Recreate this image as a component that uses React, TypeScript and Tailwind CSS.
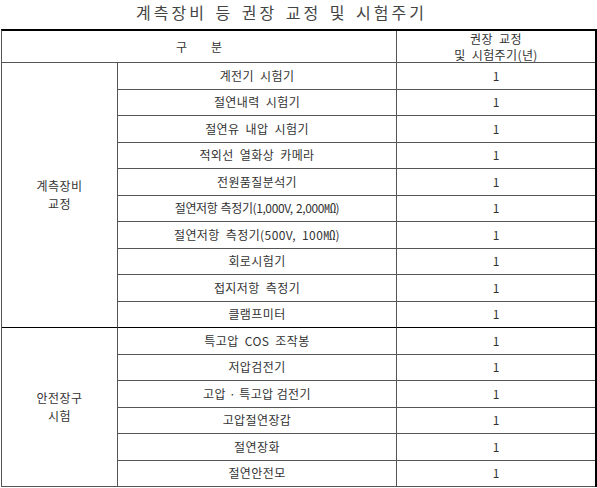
import React from "react";

const calibration = [
  "계전기 시험기",
  "절연내력 시험기",
  "절연유 내압 시험기",
  "적외선 열화상 카메라",
  "전원품질분석기",
  "절연저항 측정기(1,000V, 2,000㏁)",
  "절연저항 측정기(500V, 100㏁)",
  "회로시험기",
  "접지저항 측정기",
  "클램프미터",
];

const safety = [
  "특고압 COS 조작봉",
  "저압검전기",
  "고압 · 특고압 검전기",
  "고압절연장갑",
  "절연장화",
  "절연안전모",
];

const font = { fontFamily: '"Noto Sans CJK KR", "Noto Sans", sans-serif' };

function Rows({ items, lastDark }: { items: string[]; lastDark: boolean }) {
  return (
    <>
      {items.map((name, i) => {
        const dark = lastDark && i === items.length - 1;
        const tight = name.includes("2,000");
        const dot = name.includes("·");
        return (
          <React.Fragment key={name}>
            <div
              className={`flex items-center justify-center border-r border-b ${
                dark ? "border-b-black" : "border-b-[#555]"
              } border-r-[#555] text-[12px] ${
                tight
                  ? "tracking-[-0.4px] [word-spacing:1px]"
                  : dot
                    ? "tracking-[0.4px] [word-spacing:0px]"
                    : "tracking-[0.4px] [word-spacing:3px]"
              } text-[#333]`}
            >
              {name}
            </div>
            <div
              className={`flex items-center justify-center border-b ${
                dark ? "border-b-black" : "border-b-[#555]"
              } text-[12px] text-[#333]`}
            >
              1
            </div>
          </React.Fragment>
        );
      })}
    </>
  );
}

export default function App() {
  return (
    <div className="w-[597px] h-[488px] bg-white overflow-hidden" style={font}>
      <div className="h-[29px] pt-px pr-[34px] text-center text-[16px] leading-[22px] tracking-[3px] [word-spacing:2px] text-[#444]">
        계측장비 등 권장 교정 및 시험주기
      </div>
      <div className="ml-px w-[596px] border-t-2 border-t-black border-l border-l-[#555] border-r-2 border-r-black">
        <div className="grid grid-cols-[116px_279px_1fr] grid-rows-[32px_repeat(16,26.5px)]">
          <div className="col-span-2 flex items-center justify-center border-r border-b border-[#555] text-[12px] text-[#333]">
            구<span className="inline-block w-[24px]" />분
          </div>
          <div className="flex flex-col items-center justify-center border-b border-[#555] text-[12px] leading-[16px] tracking-[0.4px] [word-spacing:3px] text-[#333]">
            <span>권장 교정</span>
            <span>및 시험주기(년)</span>
          </div>

          <div className="row-span-10 flex flex-col items-center justify-center border-r border-r-[#555] border-b border-b-black text-[12px] leading-[18px] tracking-[0.4px] text-[#333]">
            <span>계측장비</span>
            <span>교정</span>
          </div>
          <Rows items={calibration} lastDark />

          <div className="row-span-6 flex flex-col items-center justify-center border-r border-r-[#555] border-b border-b-[#555] text-[12px] leading-[18px] tracking-[0.4px] text-[#333]">
            <span>안전장구</span>
            <span>시험</span>
          </div>
          <Rows items={safety} lastDark={false} />
        </div>
      </div>
    </div>
  );
}
